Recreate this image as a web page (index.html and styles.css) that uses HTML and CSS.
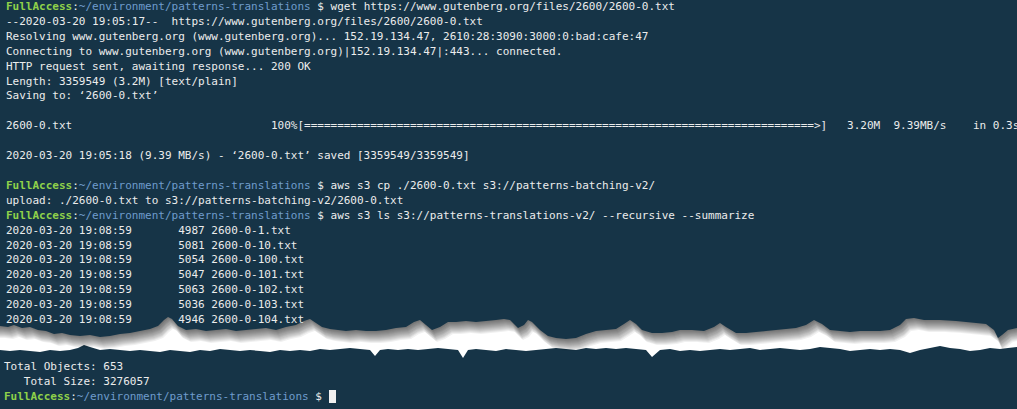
FILE: index.html
```html
<!DOCTYPE html>
<html lang="en">
<head>
  <meta charset="UTF-8" />
  <title>Terminal - wget and aws s3</title>
  <link rel="stylesheet" href="styles.css">
</head>
<body>
  <div class="terminal">
    <pre class="output top"><span class="user">FullAccess</span>:<span class="path">~/environment/patterns-translations</span> $ wget https://www.gutenberg.org/files/2600/2600-0.txt
--2020-03-20 19:05:17--  https://www.gutenberg.org/files/2600/2600-0.txt
Resolving www.gutenberg.org (www.gutenberg.org)... 152.19.134.47, 2610:28:3090:3000:0:bad:cafe:47
Connecting to www.gutenberg.org (www.gutenberg.org)|152.19.134.47|:443... connected.
HTTP request sent, awaiting response... 200 OK
Length: 3359549 (3.2M) [text/plain]
Saving to: ‘2600-0.txt’

2600-0.txt                              100%[=============================================================================>]   3.20M  9.39MB/s    in 0.3s

2020-03-20 19:05:18 (9.39 MB/s) - ‘2600-0.txt’ saved [3359549/3359549]

<span class="user">FullAccess</span>:<span class="path">~/environment/patterns-translations</span> $ aws s3 cp ./2600-0.txt s3://patterns-batching-v2/
upload: ./2600-0.txt to s3://patterns-batching-v2/2600-0.txt
<span class="user">FullAccess</span>:<span class="path">~/environment/patterns-translations</span> $ aws s3 ls s3://patterns-translations-v2/ --recursive --summarize
2020-03-20 19:08:59       4987 2600-0-1.txt
2020-03-20 19:08:59       5081 2600-0-10.txt
2020-03-20 19:08:59       5054 2600-0-100.txt
2020-03-20 19:08:59       5047 2600-0-101.txt
2020-03-20 19:08:59       5063 2600-0-102.txt
2020-03-20 19:08:59       5036 2600-0-103.txt
2020-03-20 19:08:59       4946 2600-0-104.txt</pre>
    <pre class="output bottom">Total Objects: 653
   Total Size: 3276057
<span class="user">FullAccess</span>:<span class="path">~/environment/patterns-translations</span> $ <span class="cursor"></span></pre>

    <!-- torn paper: white gap, soft shadow under the upper piece, then the piece itself -->
    <svg class="tear" width="1017" height="70" viewBox="0 300 1017 70">
      <defs>
        <path id="upper" d="M-5,300 L-5,326 L0,326 L8,327 L14,325 L22,328 L30,327 L38,330 L46,331 L54,334 L62,333 L70,335 L80,336 L90,335 L100,337 L110,336 L120,334 L130,333 L140,331 L150,329 L158,326 L164,320 L168,317 L172,319 L178,326 L186,330 L196,329 L206,331 L216,330 L226,329 L236,331 L246,330 L256,329 L266,328 L276,330 L286,327 L296,325 L304,321 L310,319 L316,323 L322,327 L330,329 L338,330 L346,331 L356,330 L366,331 L376,331 L386,330 L396,328 L406,327 L414,322 L420,320 L426,325 L432,330 L440,327 L448,322 L456,322 L466,321 L476,322 L486,321 L496,320 L504,319 L510,320 L518,328 L524,325 L528,320 L532,322 L540,330 L548,336 L556,338 L566,339 L576,338 L586,334 L596,331 L606,330 L616,329 L624,324 L630,320 L636,324 L642,330 L652,333 L662,333 L672,332 L680,330 L692,330 L704,331 L714,327 L720,323 L726,327 L736,333 L746,333 L756,332 L766,331 L776,330 L786,329 L796,328 L806,325 L814,320 L822,324 L830,330 L840,331 L850,332 L860,331 L870,331 L880,331 L890,330 L900,325 L906,319 L914,318 L924,320 L940,320 L956,321 L966,322 L976,323 L986,324 L994,330 L998,338 L1002,335 L1008,330 L1017,328 L1022,328 L1022,300 Z"/>
      </defs>
      <path class="paper" d="M0,310 L1017,310 L1017,347 L1008,348 L1000,349 L990,348 L980,350 L970,351 L960,349 L950,348 L940,346 L930,348 L920,350 L910,353 L900,350 L890,349 L880,350 L870,349 L860,350 L850,351 L840,349 L830,348 L820,347 L810,349 L800,350 L790,349 L780,348 L770,349 L760,350 L750,348 L740,349 L730,350 L720,349 L710,350 L700,351 L690,350 L680,351 L670,349 L660,350 L652,357 L646,350 L636,349 L626,348 L616,349 L606,348 L596,349 L586,348 L576,350 L566,349 L556,348 L546,349 L536,350 L526,351 L516,350 L506,349 L496,351 L486,350 L476,349 L468,350 L463,358 L458,350 L448,349 L438,348 L428,349 L418,350 L408,349 L398,350 L388,349 L380,350 L375,356 L370,350 L360,349 L350,348 L340,349 L330,350 L320,349 L310,351 L300,350 L290,351 L280,350 L270,352 L260,351 L250,350 L240,351 L230,350 L220,349 L210,351 L200,350 L190,352 L180,351 L170,350 L160,352 L150,351 L140,350 L130,351 L120,350 L110,349 L100,350 L90,347 L84,345 L78,348 L70,350 L60,351 L50,350 L40,352 L30,351 L20,350 L10,351 L0,350 Z"/>
      <g class="shadow">
        <use href="#upper" transform="translate(1,1)"/>
        <use href="#upper" transform="translate(1,2)"/>
        <use href="#upper" transform="translate(2,3)"/>
        <use href="#upper" transform="translate(2,4)"/>
        <use href="#upper" transform="translate(2,5)"/>
        <use href="#upper" transform="translate(3,6)"/>
        <use href="#upper" transform="translate(3,7)"/>
        <use href="#upper" transform="translate(3,8)"/>
        <use href="#upper" transform="translate(4,9)"/>
        <use href="#upper" transform="translate(4,10)"/>
        <use href="#upper" transform="translate(4,11)"/>
        <use href="#upper" transform="translate(5,12)"/>
      </g>
      <use href="#upper" class="piece"/>
    </svg>
  </div>
</body>
</html>
```

FILE: styles.css
```css
html, body {
  margin: 0;
  background-color: #163447;
}
.terminal {
  position: relative;
  width: 1017px;
  height: 409px;
  overflow: hidden;
  background-color: #163447;
}
.output {
  position: relative;
  z-index: 1;
  margin: 0;
  padding: 0 0 0 6px;
  font-family: "DejaVu Sans Mono", "Liberation Mono", monospace;
  font-size: 11px;
  color: #ececec;
  white-space: pre;
  overflow: hidden;
}
.top {
  line-height: 14.9px;
  height: 328px;
}
.bottom {
  line-height: 15px;
  margin-top: 31px;
  padding-left: 4px;
}
.user {
  color: #8fd14a;
  font-weight: bold;
}
.path {
  color: #6f9ccc;
}
.cursor {
  display: inline-block;
  width: 7px;
  height: 13px;
  vertical-align: -3px;
  background-color: #f0f0f0;
}
.tear {
  position: absolute;
  z-index: 0;
  left: 0;
  top: 300px;
}
.paper {
  fill: #ffffff;
}
.shadow use {
  fill: #000000;
  fill-opacity: 0.06;
}
.piece {
  fill: #163447;
}
```
